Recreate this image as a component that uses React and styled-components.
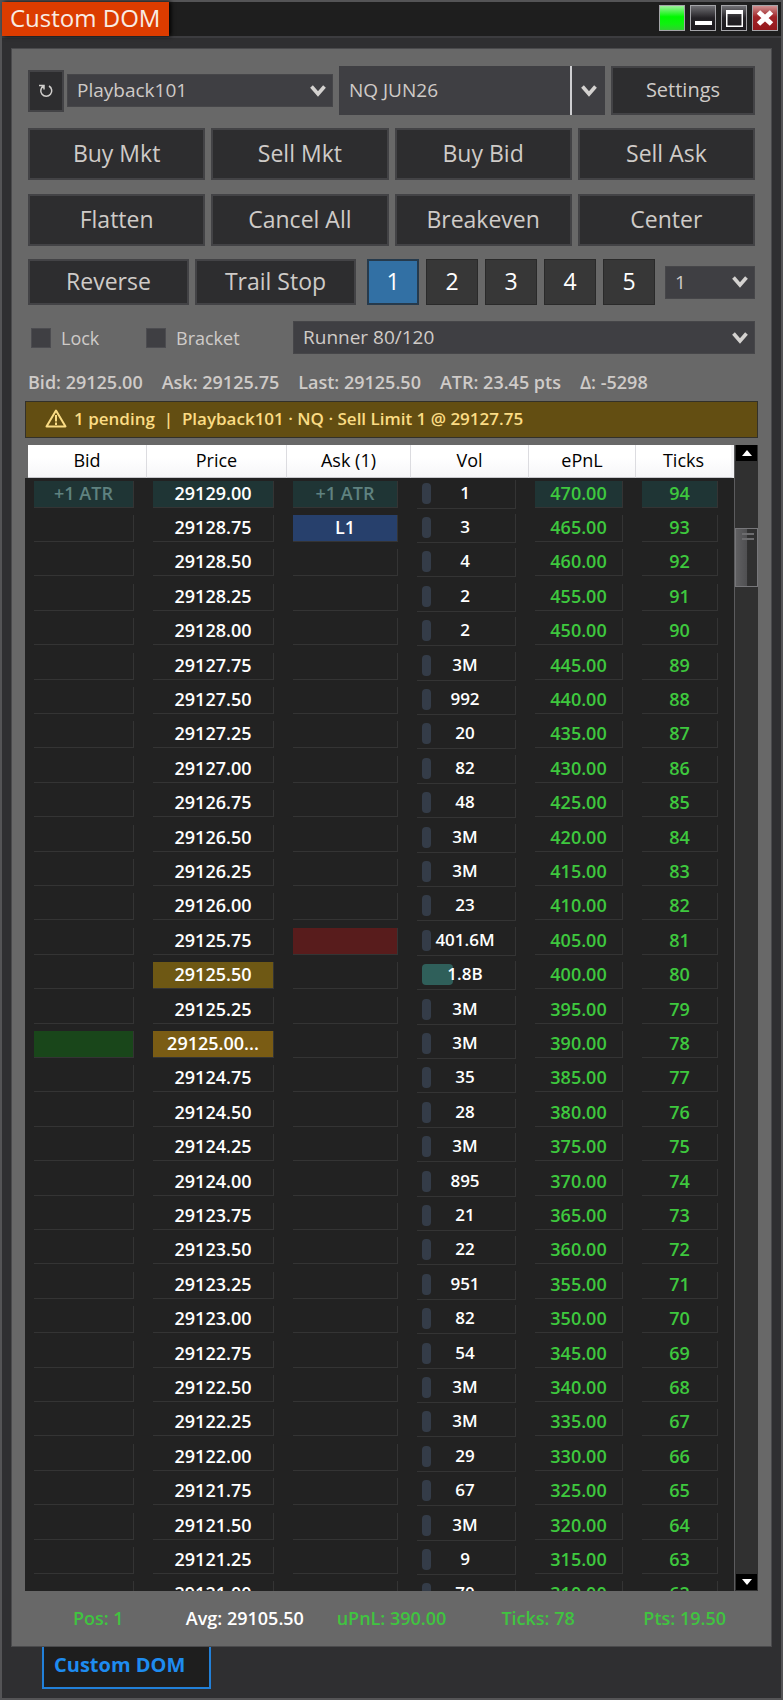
import styled, { createGlobalStyle } from "styled-components";

const FONT = '"Open Sans", "Noto Sans", "DejaVu Sans", sans-serif';

const GlobalStyle = createGlobalStyle`
  * {
    box-sizing: border-box;
  }
  body {
    margin: 0;
    background: #2f2f31;
    font-family: ${FONT};
  }
  button, input, select {
    font-family: inherit;
    margin: 0;
  }
`;

const Window = styled.div`
  display: flex;
  flex-direction: column;
  height: 100vh;
  border: 2px solid #545456;
  background: #2f2f31;
`;

const TitleBar = styled.header`
  display: flex;
  justify-content: space-between;
  height: 36px;
  flex: none;
  background: #1e1e1e;
  border-bottom: 2px solid #3c3c3f;
`;

const Title = styled.h1`
  margin: 0;
  padding: 0 9px 0 8px;
  background: #dc3c00;
  color: #f8ece4;
  font-size: 24px;
  font-weight: 400;
  line-height: 32px;
  box-shadow: 2px 0 4px #000;
`;

const WindowButtons = styled.div`
  display: flex;
  gap: 5px;
  padding: 3px 3px 0 0;
`;

const WindowButton = styled.button`
  display: flex;
  width: 26px;
  height: 26px;
  padding: 0;
  border: 1px solid #a4a4a8;
  background: ${(p) => p.$bg};
`;

const Panel = styled.main`
  display: flex;
  flex-direction: column;
  flex: 1;
  min-height: 0;
  margin: 10px 9px 0;
  padding: 17px 13px 0;
  border: 1px solid #4a4a4c;
  background: #686868;
`;

const Toolbar = styled.div`
  display: flex;
  flex-direction: column;
  gap: 13px;
  padding: 0 3px;
`;

const Row = styled.div`
  display: flex;
  align-items: center;
  gap: ${(p) => p.$gap || 6}px;
  flex: ${(p) => p.$flex || "none"};
  min-width: 0;
`;

const ButtonGrid = styled.div`
  display: grid;
  grid-template-columns: repeat(4, 1fr);
  gap: 14px 6px;
`;

const Button = styled.button`
  display: flex;
  align-items: center;
  justify-content: center;
  flex: ${(p) => p.$flex || "none"};
  height: ${(p) => p.$height || 52}px;
  padding: 0 0 2px;
  border: 2px solid #434346;
  background: #2d2d2f;
  color: #cfcbc8;
  font-size: ${(p) => p.$size || 23}px;
`;

const RefreshButton = styled(Button)`
  width: 36px;
  height: 42px;
  padding: 0;
`;

const QtyButton = styled(Button)`
  width: 52px;
  height: 46px;
  border: ${(p) => (p.$active ? "2px solid #263a4c" : "1px solid #2a2a2a")};
  background: ${(p) => (p.$active ? "#3270a4" : "#373737")};
  color: #fff;
`;

const QtyGroup = styled.div`
  display: flex;
  gap: 7px;
  margin: 0 4px 0 5px;
`;

const SelectBox = styled.div`
  display: grid;
  align-items: center;
  flex: ${(p) => p.$flex || "none"};
  width: ${(p) => p.$width || "auto"};
  min-width: 0;

  > * {
    grid-area: 1 / 1;
  }
  > svg {
    justify-self: end;
    margin-right: 7px;
    pointer-events: none;
  }
`;

const Select = styled.select`
  appearance: none;
  width: 100%;
  height: 33px;
  padding: 0 28px 1px 9px;
  border: 1px solid #464649;
  border-radius: 0;
  background: #3f3f43;
  color: #cfcbc8;
  font-size: 19px;
`;

const InstrumentBox = styled.div`
  display: flex;
  flex: 266;
  min-width: 0;
  height: 49px;
  background: #3f3f43;
`;

const InstrumentInput = styled.input`
  flex: 1;
  min-width: 0;
  padding: 0 0 2px 10px;
  border: 0;
  border-right: 2px solid #cfcfd2;
  background: transparent;
  color: #cfcbc8;
  font-size: 19px;
`;

const DropButton = styled.button`
  display: flex;
  align-items: center;
  justify-content: center;
  width: 33px;
  padding: 0;
  border: 0;
  background: transparent;
`;

const CheckLabel = styled.label`
  display: flex;
  align-items: center;
  gap: 10px;
  width: ${(p) => p.$width}px;
  color: #cfcbc8;
  font-size: 18px;
  line-height: 24px;
`;

const Checkbox = styled.input`
  appearance: none;
  width: 20px;
  height: 20px;
  margin: 0;
  border: 1px solid #4c4c50;
  background: #3f3f43;
`;

const CheckRow = styled(Row)`
  gap: 0;
  margin-top: 3px;
  padding-left: 3px;
`;

const Quotes = styled.div`
  display: flex;
  gap: 19px;
  padding: 14px 3px 5px;
  color: #cfcbc8;
  font-size: 18px;
  font-weight: 600;
  line-height: 28px;
  white-space: nowrap;
`;

const Alert = styled.div`
  display: flex;
  align-items: center;
  gap: 7px;
  flex: none;
  height: 37px;
  padding: 0 18px 2px 19px;
  border: 1px solid #33312a;
  background: #634e12;
  color: #fbdc84;
  font-size: 17px;
  font-weight: 600;
  white-space: pre;
`;

const Ladder = styled.section`
  display: flex;
  flex: 1;
  min-height: 0;
  margin-top: 7px;
`;

const LadderView = styled.div`
  flex: 1;
  min-width: 0;
  overflow: hidden;
  background: linear-gradient(#686868 33px, #222 33px);
`;

const LadderTable = styled.table`
  width: calc(100% - 3px);
  margin-left: 3px;
  table-layout: fixed;
  border-collapse: separate;
  border-spacing: 0;
`;

const Col = styled.col`
  width: ${(p) => p.$width}px;
`;

const HeadCell = styled.th`
  height: 33px;
  padding: 0 0 2px;
  border-right: ${(p) => (p.$last ? "3px solid #f4f4f6" : "1px solid #dcdce0")};
  border-bottom: 1px solid #c8c8cc;
  background: linear-gradient(#fff 40%, #f6f6f8);
  color: #000;
  font-size: 18px;
  font-weight: 400;
  line-height: 24px;
`;

// 172px per five rows
const LadderRow = styled.tr`
  height: 34px;

  &:nth-child(5n + 3),
  &:nth-child(5n + 5) {
    height: 35px;
  }
`;

const Td = styled.td`
  padding: 3px 13px 3px 6px;
  vertical-align: top;

  &:last-child {
    padding-right: 16px;
  }
`;

const Cell = styled.div`
  display: flex;
  align-items: center;
  justify-content: center;
  height: 27px;
  padding-bottom: 2px;
  border: solid #343434;
  border-width: 0 1px 1px 0;
  background: ${(p) => p.$bg || "transparent"};
  color: ${(p) => p.$color || "#fff"};
  font-size: 18px;
  font-weight: 600;
  line-height: 24px;
  white-space: nowrap;
`;

const VolCell = styled(Cell)`
  display: grid;
  grid-template-columns: 1fr;
  height: 29px;
  margin: -1px 0;
  padding-left: 5px;
  font-size: 17px;

  > * {
    grid-area: 1 / 1;
  }
`;

const VolBar = styled.span`
  width: ${(p) => p.$width}px;
  height: 21px;
  border-radius: 4px;
  background: ${(p) => (p.$width > 9 ? "#2f5f5a" : "#343c48")};
`;

const VolText = styled.span`
  padding-right: 7px;
  text-align: center;
`;

const ScrollTrack = styled.div`
  display: flex;
  flex-direction: column;
  width: 24px;
  border: solid #5c5c5e;
  border-width: 0 0 0 1px;
  background: #303030;
`;

const ScrollButton = styled.button`
  display: flex;
  align-items: center;
  justify-content: center;
  flex: none;
  height: 16px;
  margin: ${(p) => (p.$end ? "auto 1px 1px" : "0 1px")};
  padding: 0;
  border: 0;
  background: #000;
`;

const ScrollThumb = styled.div`
  display: flex;
  flex-direction: column;
  gap: 3px;
  height: 59px;
  margin-top: 67px;
  padding: 4px 3px 0 6px;
  border: 1px solid #77777a;
  background: linear-gradient(90deg, #606062, #505052 50%, #303030 55%);
`;

const Grip = styled.span`
  height: 2px;
  background: #6c6c6e;
`;

const Summary = styled.footer`
  display: grid;
  grid-template-columns: repeat(5, 1fr);
  flex: none;
  height: 55px;
  font-size: 18px;
  font-weight: 600;
  line-height: 55px;
  text-align: center;
  white-space: nowrap;
`;

const SummaryItem = styled.span`
  color: ${(p) => p.$color || "#40c440"};
`;

const Tabs = styled.nav`
  display: flex;
  flex: none;
  height: 51px;
  padding-left: 40px;
`;

const Tab = styled.a`
  height: 42px;
  padding: 0 24px 0 10px;
  border: 2px solid #2280d8;
  border-top: 0;
  background: #1e1e1e;
  color: #1e8cf0;
  font-size: 20px;
  font-weight: 700;
  line-height: 36px;
  text-decoration: none;
`;

const GREEN = "#3ec83e";
const ATR = "#1f3535";

const VOLUMES = [
  "1", "3", "4", "2", "2", "3M", "992", "20", "82", "48", "3M", "3M", "23",
  "401.6M", "1.8B", "3M", "3M", "35", "28", "3M", "895", "21", "22", "951",
  "82", "54", "3M", "3M", "29", "67", "3M", "9", "70",
];

const MARKS = {
  "29129.00": { bid: "+1 ATR", ask: "+1 ATR", bidBg: ATR, priceBg: ATR, askBg: ATR, pnlBg: ATR },
  "29128.75": { ask: "L1", askBg: "#27406c", askColor: "#fff" },
  "29125.75": { askBg: "#581c1c" },
  "29125.50": { priceBg: "#6e5814", barWidth: 31 },
  "29125.00": { bidBg: "#19461a", priceBg: "#7a5c14", suffix: "..." },
};

const rows = VOLUMES.map((vol, i) => {
  const price = (29129 - i * 0.25).toFixed(2);
  return { price, vol, pnl: (470 - i * 5).toFixed(2), ticks: 94 - i, mark: MARKS[price] || {} };
});

function Chevron() {
  return (
    <svg width="16" height="12" viewBox="0 0 16 12" fill="none" aria-hidden="true">
      <path d="M1.5 1.5 8 9 14.5 1.5" stroke="#d4d2d0" strokeWidth="3.6" />
    </svg>
  );
}

function Dropdown({ label, options, flex, width }) {
  return (
    <SelectBox $flex={flex} $width={width}>
      <Select aria-label={label}>
        {options.map((o) => (
          <option key={o}>{o}</option>
        ))}
      </Select>
      <Chevron />
    </SelectBox>
  );
}

function TitleButtons() {
  return (
    <WindowButtons>
      <WindowButton aria-label="Link" $bg="linear-gradient(#9cf09c, #00f800 45%, #10f010 75%, #30d030)" />
      <WindowButton aria-label="Minimize" $bg="linear-gradient(#707074, #242226 50%, #1c1a1e)">
        <svg width="24" height="24" viewBox="0 0 24 24">
          <path d="M4 15h17v4H4z" fill="#fff" />
        </svg>
      </WindowButton>
      <WindowButton aria-label="Maximize" $bg="linear-gradient(#707074, #242226 50%, #1c1a1e)">
        <svg width="24" height="24" viewBox="0 0 24 24">
          <path d="M4 4h17v17H4zM5.500 8v11.500h14V8z" fill="#fff" fillRule="evenodd" />
        </svg>
      </WindowButton>
      <WindowButton aria-label="Close" $bg="linear-gradient(#d09090, #a02428 45%, #94181c)">
        <svg width="24" height="24" viewBox="0 0 24 24">
          <path d="M5.500 6 18.500 18M18.500 6 5.500 18" stroke="#fff" strokeWidth="5" />
        </svg>
      </WindowButton>
    </WindowButtons>
  );
}

export default function App() {
  return (
    <>
      <GlobalStyle />
      <Window>
        <TitleBar>
          <Title>Custom DOM</Title>
          <TitleButtons />
        </TitleBar>

        <Panel>
          <Toolbar>
            <Row>
              <Row $gap={3} $flex="305">
                <RefreshButton aria-label="Refresh">
                  <svg width="14" height="14" viewBox="0 0 14 14" fill="none" stroke="#d0cecc" strokeWidth="1.5">
                    <path d="M0 1.500h5v4M4.500 2A5.500 5.500 0 1 0 10 2" />
                  </svg>
                </RefreshButton>
                <Dropdown label="Account" options={["Playback101"]} flex="1" />
              </Row>
              <InstrumentBox>
                <InstrumentInput aria-label="Instrument" defaultValue="NQ JUN26" />
                <DropButton aria-label="Choose instrument">
                  <Chevron />
                </DropButton>
              </InstrumentBox>
              <Button $flex="140" $height={49} $size={20}>Settings</Button>
            </Row>

            <ButtonGrid>
              <Button>Buy Mkt</Button>
              <Button>Sell Mkt</Button>
              <Button>Buy Bid</Button>
              <Button>Sell Ask</Button>
              <Button>Flatten</Button>
              <Button>Cancel All</Button>
              <Button>Breakeven</Button>
              <Button>Center</Button>
            </ButtonGrid>

            <Row>
              <Button $flex="1" $height={46}>Reverse</Button>
              <Button $flex="1" $height={46}>Trail Stop</Button>
              <QtyGroup>
                {[1, 2, 3, 4, 5].map((n) => (
                  <QtyButton key={n} $active={n === 1}>{n}</QtyButton>
                ))}
              </QtyGroup>
              <Dropdown label="Quantity" options={["1"]} width="90px" />
            </Row>

            <CheckRow>
              <CheckLabel $width={115}>
                <Checkbox type="checkbox" />
                Lock
              </CheckLabel>
              <CheckLabel $width={147}>
                <Checkbox type="checkbox" />
                Bracket
              </CheckLabel>
              <Dropdown label="Strategy" options={["Runner 80/120"]} flex="1" />
            </CheckRow>
          </Toolbar>

          <Quotes>
            <span>Bid: 29125.00</span>
            <span>Ask: 29125.75</span>
            <span>Last: 29125.50</span>
            <span>ATR: 23.45 pts</span>
            <span>Δ: -5298</span>
          </Quotes>

          <Alert role="status">
            <svg width="22" height="19" viewBox="0 0 22 19" fill="none" stroke="#fbdc84" strokeWidth="2" strokeLinejoin="round">
              <path d="M11 1.500 20.500 17.500h-19zM11 6v6.500M11 13.500v2.500" />
            </svg>
            <span>1 pending  |  Playback101 · NQ · Sell Limit 1 @ 29127.75</span>
          </Alert>

          <Ladder>
            <LadderView>
              <LadderTable>
                <colgroup>
                  <Col $width={119} />
                  <Col $width={140} />
                  <Col $width={124} />
                  <Col $width={118} />
                  <Col $width={107} />
                  <Col $width={98} />
                </colgroup>
                <thead>
                  <tr>
                    <HeadCell>Bid</HeadCell>
                    <HeadCell>Price</HeadCell>
                    <HeadCell>Ask (1)</HeadCell>
                    <HeadCell>Vol</HeadCell>
                    <HeadCell>ePnL</HeadCell>
                    <HeadCell $last>Ticks</HeadCell>
                  </tr>
                </thead>
                <tbody>
                  {rows.map(({ price, vol, pnl, ticks, mark }) => (
                    <LadderRow key={price}>
                      <Td><Cell $bg={mark.bidBg} $color="#5f8280">{mark.bid}</Cell></Td>
                      <Td><Cell $bg={mark.priceBg}>{price}{mark.suffix}</Cell></Td>
                      <Td><Cell $bg={mark.askBg} $color={mark.askColor || "#5f8280"}>{mark.ask}</Cell></Td>
                      <Td>
                        <VolCell>
                          <VolBar $width={mark.barWidth || 9} />
                          <VolText>{vol}</VolText>
                        </VolCell>
                      </Td>
                      <Td><Cell $bg={mark.pnlBg} $color={GREEN}>{pnl}</Cell></Td>
                      <Td><Cell $bg={mark.pnlBg} $color={GREEN}>{ticks}</Cell></Td>
                    </LadderRow>
                  ))}
                </tbody>
              </LadderTable>
            </LadderView>
            <ScrollTrack>
              <ScrollButton aria-label="Scroll up">
                <svg width="10" height="6" viewBox="0 0 10 6"><path d="M0 6 5 0l5 6z" fill="#fff" /></svg>
              </ScrollButton>
              <ScrollThumb>
                <Grip />
                <Grip />
              </ScrollThumb>
              <ScrollButton aria-label="Scroll down" $end>
                <svg width="10" height="6" viewBox="0 0 10 6"><path d="M0 0h10L5 6z" fill="#fff" /></svg>
              </ScrollButton>
            </ScrollTrack>
          </Ladder>

          <Summary>
            <SummaryItem>Pos: 1</SummaryItem>
            <SummaryItem $color="#fff">Avg: 29105.50</SummaryItem>
            <SummaryItem>uPnL: 390.00</SummaryItem>
            <SummaryItem>Ticks: 78</SummaryItem>
            <SummaryItem>Pts: 19.50</SummaryItem>
          </Summary>
        </Panel>

        <Tabs>
          <Tab href="#dom">Custom DOM</Tab>
        </Tabs>
      </Window>
    </>
  );
}
